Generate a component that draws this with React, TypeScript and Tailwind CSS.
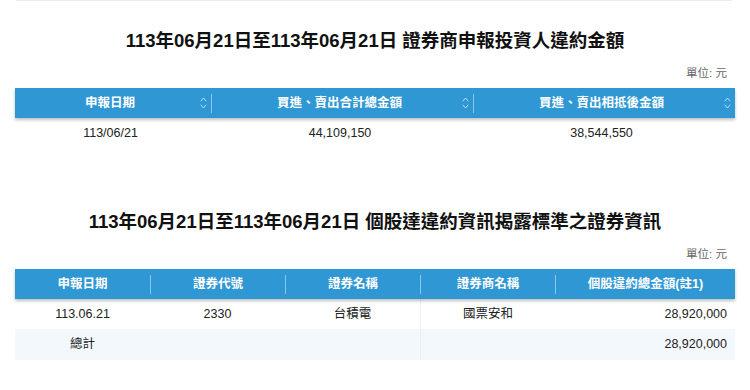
import React from "react";

function SortIcon() {
  return (
    <svg
      className="absolute right-[4px] top-1/2 -translate-y-1/2"
      width="7"
      height="14"
      viewBox="0 0 7 14"
      fill="none"
      stroke="rgba(255,255,255,0.65)"
      strokeWidth="1"
      strokeLinecap="round"
      strokeLinejoin="round"
    >
      <polyline points="1,5 3.5,2 6,5" />
      <polyline points="1,9 3.5,12 6,9" />
    </svg>
  );
}

function Divider() {
  return <div className="w-px h-[19px] self-center bg-[rgba(255,255,255,0.45)]" />;
}

function Title({ children, className }: { children: React.ReactNode; className: string }) {
  return (
    <h2 className={`${className} text-center text-[18.5px] leading-[26px] font-bold text-[#111]`}>{children}</h2>
  );
}

function Unit() {
  return <div className="mt-[11px] pr-2 text-right text-[11.5px] leading-[16px] text-[#666]">單位: 元</div>;
}

export default function App() {
  return (
    <div className="w-[750px] h-[390px] overflow-hidden bg-white [font-family:'Liberation_Sans','Noto_Sans_CJK_TC',sans-serif]">
      <div className="ml-[16px] w-[716px] h-px bg-[#ececec]" />
      <div className="ml-[15px] w-[720px]">
        <Title className="mt-[27px]">113年06月21日至113年06月21日 證券商申報投資人違約金額</Title>
        <Unit />
        <div className="mt-[7px]">
          <div className="relative z-10 flex h-[30px] bg-[#3097d5] text-[12.5px] font-bold text-white shadow-[0_2px_3px_rgba(0,0,0,0.25)]">
            <div className="relative flex w-[196px] items-center justify-center pr-[6px]">
              申報日期
              <SortIcon />
            </div>
            <Divider />
            <div className="relative flex w-[261px] items-center justify-center pr-[6px]">
              買進、賣出合計總金額
              <SortIcon />
            </div>
            <Divider />
            <div className="relative flex w-[261px] items-center justify-center pr-[6px]">
              買進、賣出相抵後金額
              <SortIcon />
            </div>
          </div>
          <div className="flex h-[30px] items-center text-[12.5px] text-[#222]">
            <div className="w-[197px] pr-[6px] text-center">113/06/21</div>
            <div className="w-[262px] pr-[6px] text-center">44,109,150</div>
            <div className="w-[261px] pr-[6px] text-center">38,544,550</div>
          </div>
        </div>

        <Title className="mt-[61px]">113年06月21日至113年06月21日 個股達違約資訊揭露標準之證券資訊</Title>
        <Unit />
        <div className="mt-[7px]">
          <div className="relative z-10 flex h-[30px] bg-[#3097d5] text-[12.5px] font-bold text-white shadow-[0_2px_3px_rgba(0,0,0,0.25)]">
            <div className="flex w-[135px] items-center justify-center">申報日期</div>
            <Divider />
            <div className="flex w-[134px] items-center justify-center">證券代號</div>
            <Divider />
            <div className="flex w-[134px] items-center justify-center">證券名稱</div>
            <Divider />
            <div className="flex w-[134px] items-center justify-center">證券商名稱</div>
            <Divider />
            <div className="flex w-[179px] items-center justify-center">個股違約總金額(註1)</div>
          </div>
          <div className="flex h-[30px] text-[12.5px] text-[#222]">
            <div className="flex w-[135px] items-center justify-center">113.06.21</div>
            <div className="flex w-[135px] items-center justify-center">2330</div>
            <div className="flex w-[135px] items-center justify-center">台積電</div>
            <div className="flex w-[135px] items-center justify-center border-l border-[#eeeeee]">國票安和</div>
            <div className="flex w-[180px] items-center justify-end pr-2">28,920,000</div>
          </div>
          <div className="flex h-[31px] bg-[#f3f8fd] text-[12.5px] text-[#222]">
            <div className="flex w-[135px] items-center justify-center">總計</div>
            <div className="w-[135px]" />
            <div className="w-[135px]" />
            <div className="w-[135px] border-l border-[#eeeeee]" />
            <div className="flex w-[180px] items-center justify-end pr-2">28,920,000</div>
          </div>
        </div>
      </div>
    </div>
  );
}
